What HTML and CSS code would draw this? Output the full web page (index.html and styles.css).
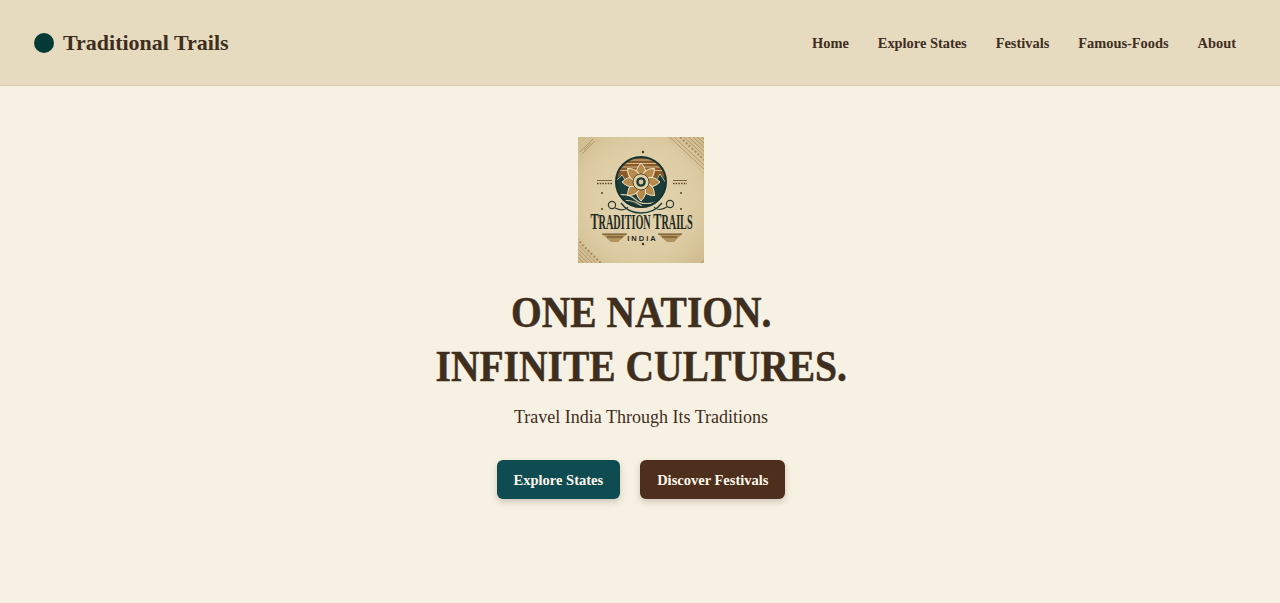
FILE: index.html
```html
<!DOCTYPE html>
<html lang="en">
<head>
<meta charset="utf-8">
<title>Traditional Trails</title>
<link rel="stylesheet" href="styles.css">
</head>
<body>
<header class="site-header">
  <a class="brand" href="#"><span class="brand-dot"></span><span class="brand-name">Traditional Trails</span></a>
  <nav class="main-nav">
    <a href="#">Home</a>
    <a href="#">Explore States</a>
    <a href="#">Festivals</a>
    <a href="#">Famous-Foods</a>
    <a href="#">About</a>
  </nav>
</header>
<main class="hero">
  <svg class="hero-logo" viewBox="0 0 126 126" width="126" height="126" role="img" aria-label="Tradition Trails India logo">
    <defs>
      <radialGradient id="paper" cx="50%" cy="50%" r="72%">
        <stop offset="0" stop-color="#e4d6b2"/>
        <stop offset="0.65" stop-color="#dccba2"/>
        <stop offset="1" stop-color="#cdb98c"/>
      </radialGradient>
      <clipPath id="disc"><circle cx="63" cy="45" r="25"/></clipPath>
      <clipPath id="cornerTR"><path d="M88 0H126V36Z"/></clipPath>
      <clipPath id="cornerBL"><path d="M0 100L26 126H0Z"/></clipPath>
      <clipPath id="cornerBR"><path d="M126 102L102 126H126Z"/></clipPath>
      <path id="petal" d="M0 -19Q6 -13 4.2 -7H-4.2Q-6 -13 0 -19Z"/>
      <g id="stripes" fill="none" stroke="#a98a56">
        <path d="M-40 0H40M-40 3H40M-40 6H40M-40 9H40M-40 12H40M-40 15H40" stroke-width="0.7"/>
        <path d="M-40 18H40" stroke-width="2" stroke-dasharray="2 2"/>
        <path d="M-40 22H40M-40 25H40M-40 28H40" stroke-width="0.7"/>
      </g>
    </defs>
    <rect width="126" height="126" fill="url(#paper)"/>
    <g clip-path="url(#cornerTR)"><use href="#stripes" transform="translate(126 -2) rotate(43) translate(-12 0)"/></g>
    <g clip-path="url(#cornerBL)"><use href="#stripes" transform="translate(0 126) rotate(225) translate(0 -2)"/></g>
    <g clip-path="url(#cornerBR)"><use href="#stripes" transform="translate(126 126) rotate(-45) translate(0 -2)"/></g>
    <path d="M2 15L15 2M4 17L17 4M6 13L13 6" stroke="#a88b58" stroke-width="0.8" fill="none"/>
    <g clip-path="url(#disc)">
      <rect x="36" y="18" width="54" height="54" fill="#1c3d39"/>
      <rect x="36" y="18" width="54" height="30" fill="#8a5a28"/>
      <path d="M36 23H90M36 26.5H90M36 30H90M36 33.5H90" stroke="#dcc597" stroke-width="0.9"/>
      <path d="M36 42L44 38L53 47L63 52L73 47L82 37L90 44V72H36Z" fill="#1c3d39"/>
      <path d="M38 44L44 38L50 47M88 46L82 37L76 47" fill="none" stroke="#e0d0a6" stroke-width="0.9"/>
      <path d="M36 59Q50 55 58 63T90 61" fill="none" stroke="#dccba2" stroke-width="1.1"/>
      <path d="M40 65Q52 61 62 68T88 66" fill="none" stroke="#dccba2" stroke-width="1.1"/>
    </g>
    <circle cx="63" cy="45" r="25" fill="none" stroke="#16332f" stroke-width="2"/>
    <g fill="#b58a4c" stroke="#f0e4c2" stroke-width="1" transform="translate(63 45)">
      <use href="#petal"/>
      <use href="#petal" transform="rotate(45)"/>
      <use href="#petal" transform="rotate(90)"/>
      <use href="#petal" transform="rotate(135)"/>
      <use href="#petal" transform="rotate(180)"/>
      <use href="#petal" transform="rotate(225)"/>
      <use href="#petal" transform="rotate(270)"/>
      <use href="#petal" transform="rotate(315)"/>
      <circle r="8" fill="#e3d3a8" stroke="#3c2a18" stroke-width="0.8"/>
      <circle r="4.8" fill="#1c3d39" stroke="none"/>
      <circle r="2.4" fill="#d9c596" stroke="none"/>
    </g>
    <g fill="#4a3216">
      <circle cx="65" cy="15" r="1.2"/>
      <circle cx="65" cy="107" r="1.2"/>
      <circle cx="24" cy="56" r="0.9"/>
      <circle cx="103" cy="56" r="0.9"/>
      <circle cx="24" cy="72" r="0.9"/>
      <circle cx="103" cy="72" r="0.9"/>
    </g>
    <path d="M19 43.5H34M95 43.5H109" stroke="#5c4422" stroke-width="0.8"/>
    <path d="M19 46.5H34M95 46.5H109" stroke="#5c4422" stroke-width="1.4" stroke-dasharray="1.5 1.2"/>
    <g fill="none" stroke="#2b3a30" stroke-width="1.2">
      <circle cx="34" cy="68" r="3.6"/>
      <circle cx="92" cy="67" r="3.6"/>
      <path d="M37 71Q46 75 50 70M89 70Q80 75 76 70"/>
      <path d="M43 66Q50 76 63 76T84 66" stroke="#1c3d39" stroke-width="1.4"/>
    </g>
    <text class="logo-title" transform="translate(63.5 92) scale(0.51 1)" text-anchor="middle"><tspan class="logo-cap">T</tspan>RADITION <tspan class="logo-cap">T</tspan>RAILS</text>
    <text class="logo-sub" x="64.5" y="104" text-anchor="middle">INDIA</text>
    <path d="M24 97H49L40 105H33Z" fill="#b3925c"/>
    <path d="M104 97H80L89 105H96Z" fill="#b3925c"/>
    <path d="M24 97H49M29 100H45M104 97H80M99 100H84" stroke="#4a3216" stroke-width="0.8"/>
  </svg>
  <h1 class="hero-title">ONE NATION.<br>INFINITE CULTURES.</h1>
  <p class="hero-sub">Travel India Through Its Traditions</p>
  <div class="hero-actions">
    <a class="btn btn-teal" href="#">Explore States</a>
    <a class="btn btn-brown" href="#">Discover Festivals</a>
  </div>
</main>
</body>
</html>
```
FILE: styles.css
```css
* { box-sizing: border-box; }
html, body { margin: 0; height: 100%; }
body {
  background: #f7f1e3;
  color: #3e2e1e;
  font-family: "Liberation Serif", "DejaVu Serif", serif;
  overflow: hidden;
}
a { color: inherit; text-decoration: none; }
.site-header {
  display: flex;
  align-items: center;
  justify-content: space-between;
  height: 86px;
  padding: 1px 44px 0 34px;
  background: #e6dabf;
  border-bottom: 1px solid #d6c8a8;
}
.brand { display: flex; align-items: center; gap: 9px; }
.brand-dot {
  width: 20px;
  height: 20px;
  border-radius: 50%;
  background: #033a36;
}
.brand-name { font-size: 22px; font-weight: 700; }
.main-nav { display: flex; gap: 29px; font-size: 14.4px; font-weight: 700; }
.hero {
  display: flex;
  flex-direction: column;
  align-items: center;
  padding: 51px 0 0 2px;
}
.hero-logo { display: block; }
.hero-title {
  margin: 22px 0 0;
  font-size: 45px;
  line-height: 54px;
  font-weight: 700;
  text-align: center;
  white-space: nowrap;
  transform: scaleX(0.878);
  -webkit-text-stroke: 0.5px #3e2e1e;
}
.hero-sub { margin: 12px 0 0; font-size: 18px; line-height: 24px; }
.hero-actions { display: flex; gap: 20px; margin-top: 31px; }
.btn {
  display: flex;
  align-items: center;
  height: 39px;
  padding: 1px 17px 0;
  border-radius: 6px;
  color: #fdf8ec;
  font-size: 14.5px;
  font-weight: 700;
  box-shadow: 0 3px 6px rgba(62, 44, 30, 0.22);
}
.btn-teal { background: #0f4c52; }
.btn-brown { background: #4e2e1c; }
.logo-title { font-family: "Liberation Serif", serif; font-size: 20px; font-weight: 700; fill: #1f2a22; }
.logo-cap { font-size: 24px; }
.logo-sub { font-family: "Liberation Sans", sans-serif; font-size: 7.5px; font-weight: 700; letter-spacing: 2px; fill: #1f2a22; }
```
